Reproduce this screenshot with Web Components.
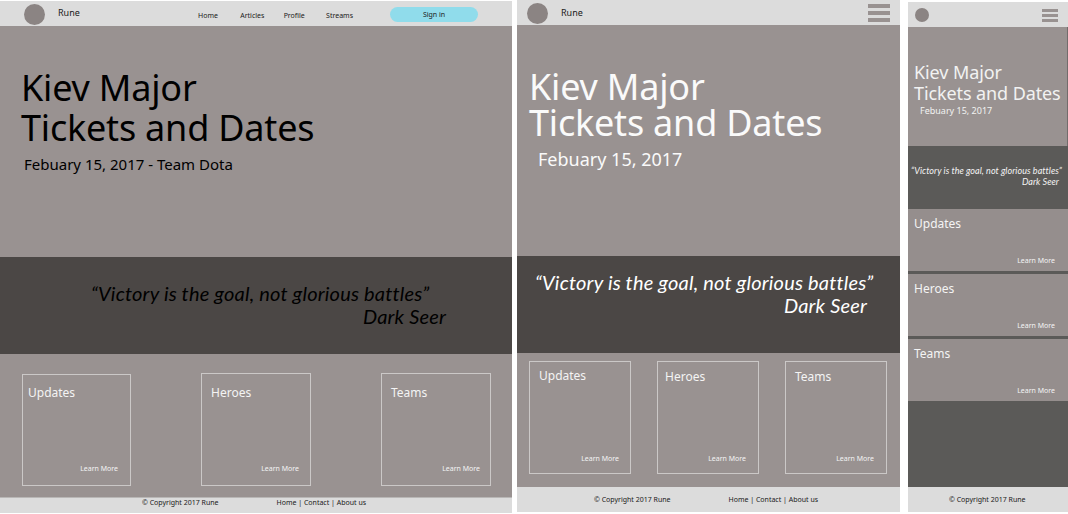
<!DOCTYPE html>
<html lang="en">
<head>
<meta charset="utf-8">
<title>Rune</title>
<style>
    body {
        margin: 0;
        width: 1068px;
        height: 514px;
        overflow: hidden;
        background: #fff;
        font-family: "Noto Sans", "Open Sans", sans-serif;
        display: flex;
        align-items: flex-start;
    }

    /* Desktop */
    .desktop {
        width: 512px;
        height: 512px;
        margin: 1px 5px 0 0;
        --ink: #000;
        --hero-h: 231px;
        --hero-pad: 42px 0 0 21px;
        --title: 36px/40px;
        --date: 15px/20px;
        --date-margin: 6px 0 0 3px;
        --quote-h: 97px;
        --quote-pad: 24px 66px 0 91px;
    }
    .desktop rune-cards { --cards-pad: 19px 21px 0 22px; --cards-h: 143px; }
    .desktop rune-card { --card-w: 110px; --card-h: 113px; --head-pad: 11px 0 0 9px; }
    .desktop rune-card:first-child {
        --card-w: 109px;
        --card-h: 112px;
        --card-margin: 1px 0 0;
        --head-pad: 10px 0 0 5px;
        --more-pad: 0 12px 11px 0;
    }

    /* Tablet */
    .tablet {
        width: 383px;
        height: 512px;
        margin-right: 8px;
        --ink: #fafafa;
        --hero-h: 231px;
        --hero-pad: 44px 0 0 12px;
        --title: 36px/36px;
        --date: 18px/24px;
        --date-margin: 6px 0 0 9px;
        --quote-h: 97px;
        --quote-ink: #fff;
        --quote-pad: 14px 33px 0 18px;
    }
    .tablet rune-cards { --cards-pad: 8px 13px 0 12px; --cards-h: 134px; }
    .tablet rune-card {
        --card-w: 102px;
        --card-h: 113px;
        --head-pad: 7px 0 0 7px;
        --more-pad: 0 12px 9px 0;
    }
    .tablet rune-card:first-child { --head-pad: 6px 0 0 9px; --more-pad: 0 11px 9px 0; }
    .tablet rune-card:last-child { --head-pad: 7px 0 0 9px; }

    /* Phone */
    .phone {
        width: 160px;
        height: 510px;
        margin-top: 2px;
        --frame-bg: #5b5a58;
        --ink: #f2f2f2;
        --hero-h: 119px;
        --hero-pad: 35px 0 0 6px;
        --title: 18px/21px;
        --title-track: -.1px;
        --date: 9px/12px;
        --date-margin: 1px 0 0 6px;
        --quote-h: 63px;
        --quote-bg: #5b5a58;
        --quote-ink: #f4f4f4;
        --quote-font: 9px/11px;
        --quote-track: .06px;
        --quote-pad: 19px 9px 0 3px;
        --author-margin: 0;
    }
    .phone rune-cards {
        --cards-dir: column;
        --cards-justify: flex-start;
        --cards-pad: 0;
        --cards-h: 278px;
        --cards-gap: 3px;
    }
    .phone rune-card {
        --card-w: 160px;
        --card-h: 62px;
        --card-bg: #958e8d;
        --card-border: 0;
        --head-pad: 7px 0 0 6px;
        --more-pad: 0 13px 5px 0;
    }
    .phone rune-hero { border-right: 1px solid #716c6b; }
</style>
</head>
<body>
    <rune-frame class="desktop">
        <rune-bar slot="bar" style="--bar-pad: 0 34px 0 24px; --logo: 21px; --name-margin: 0 0 2px 13px">
            Rune
            <rune-nav slot="end" items="Home,Articles,Profile,Streams"></rune-nav>
            <rune-button slot="end">Sign in</rune-button>
        </rune-bar>
        <rune-hero date="Febuary 15, 2017 - Team Dota">Kiev Major<br>Tickets and Dates</rune-hero>
        <rune-quote author="Dark Seer">“Victory is the goal, not glorious battles”</rune-quote>
        <rune-cards>
            <rune-card>Updates</rune-card>
            <rune-card>Heroes</rune-card>
            <rune-card style="--more-pad: 0 10px 11px 0">Teams</rune-card>
        </rune-cards>
        <rune-footer style="--foot-pad: 0 0 0 142px; --foot-h: 16px; --foot-top: 0; --foot-line: #b9b7b6" links="Home | Contact | About us">© Copyright 2017 Rune</rune-footer>
    </rune-frame>

    <rune-frame class="tablet">
        <rune-bar slot="bar" style="--bar-pad: 0 10px 0 10px; --logo: 21px; --name-margin: 1px 0 0 13px">
            Rune
            <rune-menu slot="end"></rune-menu>
        </rune-bar>
        <rune-hero date="Febuary 15, 2017">Kiev Major<br>Tickets and Dates</rune-hero>
        <rune-quote author="Dark Seer">“Victory is the goal, not glorious battles”</rune-quote>
        <rune-cards>
            <rune-card>Updates</rune-card>
            <rune-card>Heroes</rune-card>
            <rune-card>Teams</rune-card>
        </rune-cards>
        <rune-footer style="--foot-pad: 0 0 0 77px; --foot-h: 25px; --foot-top: 7px" links="Home | Contact | About us">© Copyright 2017 Rune</rune-footer>
    </rune-frame>

    <rune-frame class="phone">
        <rune-bar slot="bar" style="--bar-pad: 0 10px 0 7px; --logo: 14px">
            <rune-menu slot="end" style="--menu-w: 16px; --menu-bar: 3px; --menu-gap: 2px"></rune-menu>
        </rune-bar>
        <rune-hero date="Febuary 15, 2017">Kiev Major<br>Tickets and Dates</rune-hero>
        <rune-quote author="Dark Seer">“Victory is the goal, not glorious battles”</rune-quote>
        <rune-cards>
            <rune-card>Updates</rune-card>
            <rune-card>Heroes</rune-card>
            <rune-card>Teams</rune-card>
        </rune-cards>
        <rune-footer style="--foot-pad: 0 0 0 41px; --foot-h: 25px; --foot-top: 7px">© Copyright 2017 Rune</rune-footer>
    </rune-frame>

<script>
    // Shared base: renders the template of the subclass into an open shadow root
    class RuneElement extends HTMLElement {
        constructor() {
            super();
            this.attachShadow({ mode: 'open' });
        }

        connectedCallback() {
            this.shadowRoot.innerHTML = this.template();
        }
    }

    class RuneFrame extends RuneElement {
        template() {
            return `
            <style>
                :host {
                    display: flex;
                    flex-direction: column;
                    flex-shrink: 0;
                    overflow: hidden;
                    background: var(--frame-bg, #999291);
                }
            </style>
            <slot name="bar"></slot>
            <slot></slot>`;
        }
    }

    class RuneBar extends RuneElement {
        template() {
            return `
            <style>
                :host {
                    display: flex;
                    align-items: center;
                    flex: none;
                    box-sizing: border-box;
                    height: 25px;
                    padding: var(--bar-pad);
                    background: #dcdcdc;
                    color: #1a1a1a;
                    font-size: 9px;
                    line-height: 12px;
                }
                .logo {
                    width: var(--logo);
                    height: var(--logo);
                    margin-top: 1px;
                    border-radius: 50%;
                    background: #8b8483;
                }
                .name { margin: var(--name-margin, 0); }
                .end {
                    display: flex;
                    align-items: center;
                    margin-left: auto;
                }
            </style>
            <span class="logo"></span>
            <span class="name"><slot></slot></span>
            <div class="end"><slot name="end"></slot></div>`;
        }
    }

    class RuneNav extends RuneElement {
        template() {
            const items = this.getAttribute('items').split(',');
            return `
            <style>
                :host { display: block; margin-right: 37px; }
                nav {
                    display: flex;
                    justify-content: space-between;
                    width: 155px;
                    padding-top: 4px;
                    font-size: 7px;
                    line-height: 10px;
                }
                span:first-child { margin-right: 3px; }
                span:last-child { margin-left: 2px; }
            </style>
            <nav>${items.map((item) => `<span>${item}</span>`).join('')}</nav>`;
        }
    }

    class RuneButton extends RuneElement {
        template() {
            return `
            <style>
                :host { display: block; }
                button {
                    display: block;
                    width: 88px;
                    height: 15px;
                    margin-top: 2px;
                    padding: 0;
                    border: 0;
                    border-radius: 8px;
                    background: #90dceb;
                    color: #1a1a1a;
                    font: 7px/15px "Noto Sans", sans-serif;
                }
            </style>
            <button><slot></slot></button>`;
        }
    }

    class RuneMenu extends RuneElement {
        template() {
            return `
            <style>
                :host {
                    display: flex;
                    flex-direction: column;
                    gap: var(--menu-gap, 3px);
                    width: var(--menu-w, 22px);
                    margin-top: 1px;
                }
                i { height: var(--menu-bar, 4px); background: #999291; }
            </style>
            <i></i><i></i><i></i>`;
        }
    }

    class RuneHero extends RuneElement {
        template() {
            return `
            <style>
                :host {
                    display: block;
                    flex: none;
                    box-sizing: border-box;
                    height: var(--hero-h);
                    padding: var(--hero-pad);
                    background: #999291;
                    color: var(--ink);
                    white-space: nowrap;
                }
                h1 {
                    margin: 0;
                    font: 400 var(--title) "Noto Sans", sans-serif;
                    letter-spacing: var(--title-track, -.2px);
                }
                p { margin: var(--date-margin); font: var(--date) "Noto Sans", sans-serif; }
            </style>
            <h1><slot></slot></h1>
            <p>${this.getAttribute('date')}</p>`;
        }
    }

    class RuneQuote extends RuneElement {
        template() {
            return `
            <style>
                :host {
                    display: block;
                    flex: none;
                    box-sizing: border-box;
                    height: var(--quote-h);
                    padding: var(--quote-pad);
                    background: var(--quote-bg, #4b4745);
                    color: var(--quote-ink, #000);
                    font: italic 400 var(--quote-font, 20px/24px) Lato, sans-serif;
                    letter-spacing: var(--quote-track, .2px);
                    white-space: nowrap;
                }
                p, footer { margin: 0; }
                footer { margin-top: var(--author-margin, -1px); text-align: right; }
            </style>
            <p><slot></slot></p>
            <footer>${this.getAttribute('author')}</footer>`;
        }
    }

    class RuneCards extends RuneElement {
        template() {
            return `
            <style>
                :host {
                    display: flex;
                    flex: none;
                    flex-direction: var(--cards-dir, row);
                    align-items: flex-start;
                    justify-content: var(--cards-justify, space-between);
                    gap: var(--cards-gap, 0);
                    box-sizing: border-box;
                    height: var(--cards-h);
                    padding: var(--cards-pad);
                }
            </style>
            <slot></slot>`;
        }
    }

    class RuneCard extends RuneElement {
        template() {
            return `
            <style>
                :host {
                    display: flex;
                    flex: none;
                    flex-direction: column;
                    justify-content: space-between;
                    box-sizing: border-box;
                    width: var(--card-w);
                    height: var(--card-h);
                    margin: var(--card-margin, 0);
                    border: var(--card-border, 1px solid #cbc8c7);
                    background: var(--card-bg, none);
                    color: #f4f4f4;
                }
                h2 {
                    margin: 0;
                    padding: var(--head-pad);
                    font-size: 12px;
                    font-weight: 400;
                    line-height: 16px;
                }
                a {
                    align-self: flex-end;
                    padding: var(--more-pad, 0 11px 11px 0);
                    font-size: 7px;
                    line-height: 10px;
                }
            </style>
            <h2><slot></slot></h2>
            <a>Learn More</a>`;
        }
    }

    class RuneFooter extends RuneElement {
        template() {
            const links = this.getAttribute('links');
            return `
            <style>
                :host {
                    display: flex;
                    gap: 58px;
                    flex: none;
                    box-sizing: border-box;
                    height: var(--foot-h);
                    padding: var(--foot-pad);
                    border-top: 1px solid var(--foot-line, #dcdcdc);
                    background: #dcdcdc;
                    color: #1a1a1a;
                    font-size: 7px;
                    line-height: 10px;
                    white-space: nowrap;
                }
                span { margin-top: var(--foot-top); }
            </style>
            <span><slot></slot></span>
            ${links ? `<span>${links}</span>` : ''}`;
        }
    }

    customElements.define('rune-frame', RuneFrame);
    customElements.define('rune-bar', RuneBar);
    customElements.define('rune-nav', RuneNav);
    customElements.define('rune-button', RuneButton);
    customElements.define('rune-menu', RuneMenu);
    customElements.define('rune-hero', RuneHero);
    customElements.define('rune-quote', RuneQuote);
    customElements.define('rune-cards', RuneCards);
    customElements.define('rune-card', RuneCard);
    customElements.define('rune-footer', RuneFooter);
</script>
</body>
</html>
